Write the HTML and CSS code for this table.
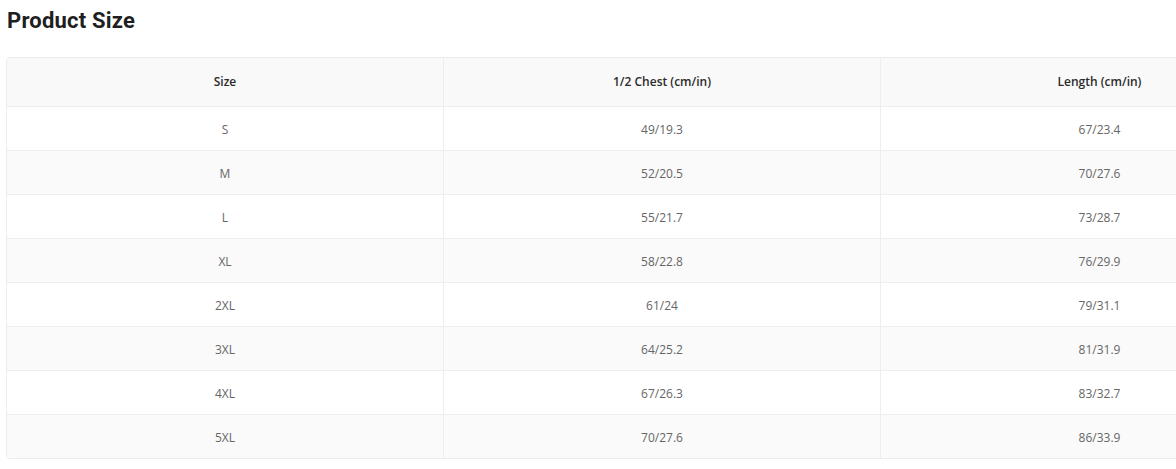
FILE: index.html
```html
<!DOCTYPE html>
<html lang="en">
<head>
<meta charset="utf-8">
<title>Product Size</title>
<link rel="stylesheet" href="styles.css">
</head>
<body>
<h2 class="title">Product Size</h2>
<div class="table-wrap">
<table class="size-table">
<thead>
<tr><th>Size</th><th>1/2 Chest (cm/in)</th><th>Length (cm/in)</th></tr>
</thead>
<tbody>
<tr><td>S</td><td>49/19.3</td><td>67/23.4</td></tr>
<tr><td>M</td><td>52/20.5</td><td>70/27.6</td></tr>
<tr><td>L</td><td>55/21.7</td><td>73/28.7</td></tr>
<tr><td>XL</td><td>58/22.8</td><td>76/29.9</td></tr>
<tr><td>2XL</td><td>61/24</td><td>79/31.1</td></tr>
<tr><td>3XL</td><td>64/25.2</td><td>81/31.9</td></tr>
<tr><td>4XL</td><td>67/26.3</td><td>83/32.7</td></tr>
<tr><td>5XL</td><td>70/27.6</td><td>86/33.9</td></tr>
</tbody>
</table>
</div>
</body>
</html>
```
FILE: styles.css
```css
html, body {
  margin: 0;
  padding: 0;
  background: #fff;
}
body {
  padding: 0 0 0 6px;
  font-family: "Open Sans", "Noto Sans", sans-serif;
  overflow: hidden;
}
.title {
  margin: 0;
  padding: 7px 0 0 1px;
  height: 57px;
  box-sizing: border-box;
  font-family: "Roboto", "Lato", sans-serif;
  font-weight: 700;
  font-size: 22px;
  letter-spacing: 0.2px;
  line-height: 27px;
  color: #1f1f1f;
}
.table-wrap {
  width: 100%;
  overflow: hidden;
}
.size-table {
  width: 1313px;
  table-layout: fixed;
  border-collapse: separate;
  border-spacing: 0;
  border: 1px solid #ececec;
  border-radius: 4px;
  overflow: hidden;
}
.size-table th,
.size-table td {
  text-align: center;
  font-size: 12px;
  border-right: 1px solid #eeeeee;
  border-bottom: 1px solid #eeeeee;
  padding: 0;
}
.size-table th:last-child,
.size-table td:last-child {
  border-right: none;
}
.size-table tbody tr:last-child td {
  border-bottom: none;
}
.size-table th {
  height: 46px;
  padding-bottom: 2px;
  font-weight: 600;
  color: #2b2b2b;
  background: #f9f9f9;
}
.size-table td {
  height: 42px;
  padding-top: 1px;
  color: #666;
  font-weight: 400;
  background: #fff;
}
.size-table tbody tr:nth-child(even) td {
  background: #fafafa;
}
```
